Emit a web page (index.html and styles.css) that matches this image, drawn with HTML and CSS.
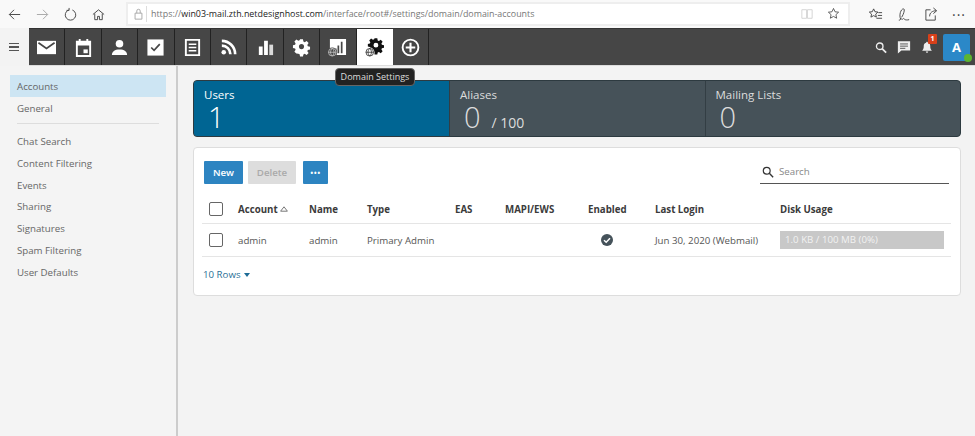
FILE: index.html
```html
<!DOCTYPE html>
<html lang="en">
<head>
<meta charset="utf-8">
<title>Domain Settings</title>
<link rel="stylesheet" href="styles.css">
</head>
<body>
<header class="browser">
  <div class="browser-btns">
    <svg class="bi" viewBox="0 0 16 16"><path d="M14 8H2.500M7.500 3 2.500 8l5 5" class="ln"/></svg>
    <svg class="bi dim" viewBox="0 0 16 16"><path d="M2 8h11.500M8.500 3l5 5-5 5" class="ln"/></svg>
    <svg class="bi" viewBox="0 0 16 16"><path d="M6 3.200A5.600 5.600 0 1 0 10 3.200M6.500 1v2.600H3.800" class="ln"/></svg>
    <svg class="bi" viewBox="0 0 16 16"><path d="M2 8l6-5 6 5M4 7v6.500h3V10h2v3.500h3V7" class="ln"/></svg>
  </div>
  <div class="address">
    <svg class="lock" viewBox="0 0 12 14"><path d="M2 6h8v7H2zM4 6V3.500a2 2 0 0 1 4 0V6" class="ln"/></svg>
    <span class="url">https://<b>win03-mail.zth.netdesignhost.com</b>/interface/root#/settings/domain/domain-accounts</span>
    <svg class="book" viewBox="0 0 14 14"><path d="M1 2h5.500v10H1zM7.500 2H13v10H7.500z" class="ln"/></svg>
    <svg class="star" viewBox="0 0 16 16"><path d="M8 1.800l1.900 4.100 4.400.5-3.300 3 .9 4.400L8 11.600l-3.900 2.200.9-4.400-3.300-3 4.400-.5z" class="ln"/></svg>
  </div>
  <div class="browser-right">
    <svg class="bi" viewBox="0 0 16 16"><path d="M6 2l1.400 3 3.200.4-2.400 2.200.7 3.200L6 9.200l-2.900 1.600.7-3.200L1.400 5.400 4.600 5zM11 6h4M10.500 9H15M9 12h6" class="ln"/></svg>
    <svg class="bi" viewBox="0 0 16 16"><path d="M5 13C3 9 5 2 8 2c2 0 0 6-2 9M3 14h1c2-3 2 0 3-1s1-1 2 0 3 1 5 .5" class="ln"/></svg>
    <svg class="bi" viewBox="0 0 16 16"><path d="M7 3H2v11h10V9M6 10c0-4 3-6 7-6M10 1l3.500 3L10 7" class="ln"/></svg>
    <span class="more">···</span>
  </div>
</header>

<nav class="nav">
  <div class="hamb"><i></i><i></i><i></i></div>
  <a class="tab"><svg viewBox="0 0 20 20"><path d="M0 3h20v14H0z" fill="#fff"/><path d="M1.500 5l8.500 6 8.500-6" fill="none" stroke="#464646" stroke-width="1.800"/></svg></a>
  <a class="tab"><svg viewBox="0 0 20 20"><path fill="#fff" fill-rule="evenodd" d="M2 3h3V1h2v2h6V1h2v2h3v17H2zM4 8v10h12V8z"/><path fill="#fff" d="M10 12h4.500v4H10z"/></svg></a>
  <a class="tab"><svg viewBox="0 0 20 20"><circle cx="10" cy="6" r="4" fill="#fff"/><path d="M2 18c0-4 3-6 8-6s8 2 8 6z" fill="#fff"/></svg></a>
  <a class="tab"><svg viewBox="0 0 20 20"><path d="M1.500 1.500h17v17h-17z" fill="#fff"/><path d="M5.500 10l3 3 6-6.500" fill="none" stroke="#464646" stroke-width="1.800"/></svg></a>
  <a class="tab"><svg viewBox="0 0 20 20"><path d="M3 2h14v16H3z" fill="none" stroke="#fff" stroke-width="2"/><path d="M6 6.500h8M6 10h8M6 13.500h8" stroke="#fff" stroke-width="1.600"/></svg></a>
  <a class="tab"><svg viewBox="0 0 20 20"><circle cx="5" cy="15" r="2.400" fill="#fff"/><path d="M3 8a9 9 0 0 1 9 9M3 3a14 14 0 0 1 14 14" fill="none" stroke="#fff" stroke-width="2.800"/></svg></a>
  <a class="tab"><svg viewBox="0 0 20 20"><path fill="#fff" d="M3 9h4v9H3zM8.500 3h4v15h-4z"/><path fill="#fff" d="M14 7h4v11h-4z" opacity=".8"/></svg></a>
  <a class="tab"><svg viewBox="0 0 20 20"><path fill="#fff" fill-rule="evenodd" d="M8.300 1h3.400l.5 2.600 1.500.7 2.300-1.400 2.300 2.400-1.500 2.200.6 1.500 2.600.6v3.200l-2.600.6-.6 1.500 1.500 2.200-2.300 2.300-2.300-1.400-1.500.6-.5 2.400H8.300l-.5-2.500-1.500-.6L4 17.700l-2.300-2.300 1.400-2.200-.6-1.500L0 11.100V7.900l2.500-.5.600-1.500-1.400-2.300L4 1.200l2.300 1.500 1.500-.7zM10 6.500a3 3 0 1 0 0 6 3 3 0 0 0 0-6z" transform="translate(1 .5) scale(.9)"/></svg></a>
  <a class="tab"><svg viewBox="0 0 20 20"><path fill="#fff" d="M2 1h17v17H9v-7H2z"/><path fill="#464646" d="M10 8h1.800v8H10zM13.500 4h1.800v12h-1.800z"/><circle cx="4.500" cy="15" r="5" fill="#464646"/><g class="globe"><circle cx="4.500" cy="15" r="4"/><path d="M.5 15h8M4.500 11c-2.400 2.400-2.400 5.600 0 8 2.400-2.400 2.400-5.600 0-8"/></g></svg></a>
  <a class="tab active"><svg viewBox="0 0 20 20"><path fill="#111" fill-rule="evenodd" d="M8.300 1h3.400l.5 2.600 1.500.7 2.300-1.400 2.300 2.400-1.500 2.200.6 1.500 2.600.6v3.200l-2.600.6-.6 1.500 1.500 2.200-2.300 2.300-2.300-1.400-1.500.6-.5 2.400H8.300l-.5-2.500-1.500-.6L4 17.700l-2.300-2.300 1.400-2.200-.6-1.500L0 11.100V7.900l2.500-.5.600-1.500-1.400-2.300L4 1.200l2.300 1.500 1.500-.7zM10 6.500a3 3 0 1 0 0 6 3 3 0 0 0 0-6z" transform="translate(3 -.5) scale(.85)"/><circle cx="5" cy="15" r="5" fill="#fff"/><g class="globe dark"><circle cx="5" cy="15" r="4"/><path d="M1 15h8M5 11c-2.400 2.400-2.400 5.600 0 8 2.400-2.400 2.400-5.600 0-8"/></g></svg></a>
  <a class="tab"><svg viewBox="0 0 20 20"><circle cx="10" cy="10" r="8.300" fill="none" stroke="#fff" stroke-width="2"/><path d="M10 5v10M5 10h10" stroke="#fff" stroke-width="2.200"/></svg></a>
  <div class="nav-right">
    <svg class="ni" viewBox="0 0 14 14"><circle cx="5.500" cy="5.500" r="3.800" fill="none" stroke="#eee" stroke-width="1.600"/><path d="M8.500 8.500l4.500 4.500" stroke="#eee" stroke-width="2"/></svg>
    <svg class="ni chat" viewBox="0 0 16 16"><path fill="#eee" d="M1 1.500h14V12H5l-4 3.500z"/><path d="M3.500 4.500h9M3.500 7h9M3.500 9.500h6" stroke="#464646"/></svg>
    <span class="bell">
      <svg class="ni" viewBox="0 0 14 16"><path fill="#eee" d="M7 1a1 1 0 0 1 1 1.200c2.400.6 3 2.400 3 4.300 0 2.500.6 4 2 5.500H1c1.400-1.500 2-3 2-5.500 0-1.900.6-3.700 3-4.300A1 1 0 0 1 7 1zM5.500 13h3a1.500 1.500 0 0 1-3 0z"/></svg>
      <em class="badge">1</em>
    </span>
    <span class="avatar">A<i class="online"></i></span>
  </div>
</nav>
<div class="tooltip">Domain Settings</div>

<div class="page">
  <aside class="side">
    <ul class="menu">
      <li class="sel">Accounts</li>
      <li>General</li>
    </ul>
    <hr class="rule">
    <ul class="menu">
      <li>Chat Search</li>
      <li>Content Filtering</li>
      <li>Events</li>
      <li>Sharing</li>
      <li>Signatures</li>
      <li>Spam Filtering</li>
      <li>User Defaults</li>
    </ul>
  </aside>
  <main class="main">
    <section class="stats">
      <div class="stat on"><span class="lbl">Users</span><span class="num">1</span></div>
      <div class="stat"><span class="lbl">Aliases</span><span class="num">0<small>/ 100</small></span></div>
      <div class="stat"><span class="lbl">Mailing Lists</span><span class="num">0</span></div>
    </section>
    <section class="card">
      <div class="tools">
        <button class="btn pri">New</button>
        <button class="btn off">Delete</button>
        <button class="btn pri dots">•••</button>
        <label class="search">
          <svg viewBox="0 0 14 14"><circle cx="5.500" cy="5.500" r="4" fill="none" stroke="#333" stroke-width="1.400"/><path d="M8.500 8.500L13 13" stroke="#333" stroke-width="1.600"/></svg>
          <span>Search</span>
        </label>
      </div>
      <div class="row head">
        <span class="c0"><i class="cb"></i></span>
        <span class="c1">Account <svg class="sort" viewBox="0 0 8 6"><path d="M4 .8L7.400 5.200H.6z" fill="none" stroke="#777"/></svg></span>
        <span class="c2">Name</span>
        <span class="c3">Type</span>
        <span class="c4">EAS</span>
        <span class="c5">MAPI/EWS</span>
        <span class="c6">Enabled</span>
        <span class="c7">Last Login</span>
        <span class="c8">Disk Usage</span>
      </div>
      <div class="row body-row">
        <span class="c0"><i class="cb"></i></span>
        <span class="c1">admin</span>
        <span class="c2">admin</span>
        <span class="c3">Primary Admin</span>
        <span class="c4"></span>
        <span class="c5"></span>
        <span class="c6 en"><svg viewBox="0 0 12 12"><circle cx="6" cy="6" r="6" fill="#45525a"/><path d="M3 6.200l2.200 2.100L9 4.200" fill="none" stroke="#fff" stroke-width="1.500"/></svg></span>
        <span class="c7">Jun 30, 2020 (Webmail)</span>
        <span class="c8"><span class="disk">1.0 KB / 100 MB (0%)</span></span>
      </div>
      <div class="rows">10 Rows <i class="caret"></i></div>
    </section>
  </main>
</div>
</body>
</html>
```
FILE: styles.css
```css
* { box-sizing: border-box; }
html, body { margin: 0; height: 100%; overflow: hidden; }
body { font-family: "Open Sans", sans-serif; font-size: 9.700px; color: #555; background: #f3f3f3; display: flex; flex-direction: column; position: relative; }
svg { display: block; }
.ln { fill: none; stroke: #444; stroke-width: 1; }

.browser { height: 28px; flex: none; display: flex; align-items: center; background: #f9f9f9; }
.browser-btns { display: flex; gap: 13px; padding-left: 7px; width: 126px; flex: none; }
.bi { width: 15px; height: 15px; flex: none; }
.dim { opacity: .45; }
.address { width: 724px; height: 24px; margin-top: -1px; flex: none; background: #fff; border: 2px solid #eee; display: flex; align-items: center; padding: 0 8px 0 5px; }
.lock { width: 11px; height: 12px; opacity: .5; flex: none; }
.url { margin-left: 2px; padding-left: 4px; border-left: 1px solid #ddd; font-size: 8.900px; color: #777; flex: 1; white-space: nowrap; line-height: 16px; }
.url b { font-weight: 400; color: #222; }
.book { width: 12px; height: 12px; opacity: .25; margin-right: 14px; flex: none; }
.star { width: 13px; height: 13px; flex: none; }
.browser-right { display: flex; gap: 13px; align-items: center; padding-left: 18px; }
.more { font-size: 14px; color: #444; line-height: 15px; letter-spacing: 1px; }

.nav { height: 38px; flex: none; display: flex; background: #464646; border-top: 1px solid #333; border-bottom: 1px solid #ddd; }
.hamb { width: 29px; flex: none; background: #f3f3f3; margin: -1px 0; display: flex; flex-direction: column; justify-content: center; gap: 2px; padding-left: 9px; }
.hamb i { display: block; width: 10px; height: 1.500px; background: #555; }
.tab { width: 36.400px; flex: none; display: flex; align-items: center; justify-content: center; border-right: 1px solid #222; }
.tab svg { width: 19px; height: 19px; }
.tab.active { background: #fff; border-right-color: #fff; }
.globe { fill: none; stroke: #ddd; stroke-width: .7; }
.globe.dark { stroke: #222; stroke-width: .8; }
.nav-right { margin-left: auto; display: flex; align-items: center; gap: 10px; padding-right: 5px; }
.ni { width: 12px; height: 13px; }
.chat { width: 14px; height: 14px; }
.bell { position: relative; }
.badge { position: absolute; right: -4px; top: -7px; width: 9px; height: 10px; background: #d8401a; color: #fff; font: 700 7px/10px "Open Sans", sans-serif; text-align: center; border-radius: 1px; }
.avatar { position: relative; width: 27px; height: 27px; background: #2b88c8; color: #fff; font-size: 13px; font-weight: 700; display: flex; align-items: center; justify-content: center; border-radius: 2px; }
.online { position: absolute; right: -2px; bottom: -1px; width: 8px; height: 8px; border-radius: 50%; background: #5cb531; }

.tooltip { position: absolute; left: 335px; top: 68px; height: 18px; width: 80px; background: #222; color: #ddd; border: 1px solid #666; border-radius: 4px; font-size: 9px; line-height: 16px; text-align: center; white-space: nowrap; z-index: 2; }

.page { flex: 1; display: flex; min-height: 0; }
.side { width: 178px; flex: none; border-right: 2px solid #ccc; padding: 9px 10px 0; background: #f4f4f4; }
.menu { list-style: none; margin: 0; padding: 0; }
.menu li { height: 21.900px; line-height: 23px; padding-left: 7px; color: #666; }
.menu li.sel { background: #cde5f3; }
.rule { border: 0; height: 1px; background: #ddd; margin: 4px 7px 6px; }

.main { flex: 1; padding: 14px 14px 0 15px; min-width: 0; }
.stats { height: 57px; display: flex; border: 1px solid #2d3a40; border-radius: 4px; overflow: hidden; background: #465259; }
.stat { flex: 1; padding: 6px 10px 0; color: #ddd; border-left: 1px solid #333e44; display: flex; flex-direction: column; }
.stat.on { background: #006593; color: #fff; border-left: 0; flex: 0 0 255px; }
.lbl { font-size: 11.500px; line-height: 15px; }
.num { font-size: 29px; line-height: 30px; padding-left: 4px; font-weight: 300; }
.num small { font-size: 14px; font-weight: 400; margin-left: 11px; }

.card { margin-top: 10px; height: 149px; background: #fff; border: 1px solid #ddd; border-radius: 4px; padding: 12px 9px 0 8px; }
.tools { display: flex; align-items: center; padding: 0 2px; height: 24px; }
.btn { height: 23px; border: 0; border-radius: 1px; font: 600 9.700px "Open Sans", sans-serif; padding: 0; }
.pri { background: #2d84c1; color: #fff; width: 39px; }
.off { background: #ddd; color: #aaa; width: 48px; margin-left: 5px; }
.dots { width: 25px; margin-left: 7px; font-size: 8px; letter-spacing: .5px; }
.search { margin-left: auto; width: 189px; height: 24px; border-bottom: 1px solid #555; display: flex; align-items: center; gap: 5px; padding: 1px 0 1px 2px; color: #888; }
.search svg { width: 12px; height: 12px; }

.row { display: grid; grid-template-columns: 36px 71px 58px 88px 50px 83px 67px 125px 1fr; align-items: center; }
.head { margin-top: 10px; height: 30px; padding-top: 1px; border-bottom: 1px solid #e5e5e5; font-weight: 700; color: #3b3b3b; }
.body-row { height: 33px; border-bottom: 1px solid #e5e5e5; color: #555; }
.row span { white-space: nowrap; }
.c0 { padding-left: 7px; }
.c1 { display: flex; align-items: center; gap: 2px; }
.cb { display: block; width: 14px; height: 14px; border: 1.500px solid #666; border-radius: 2px; background: #fff; }
.sort { width: 8px; height: 6px; }
.en svg { width: 12px; height: 12px; margin-left: 13px; }
.disk { display: block; background: #c8c8c8; color: #f2f2f2; height: 18px; line-height: 18px; padding-left: 5px; width: 164px; }
.rows { margin-top: 11px; color: #2a6f96; padding-left: 1px; display: flex; align-items: center; gap: 3px; }
.caret { width: 0; height: 0; border: 3px solid transparent; border-top: 4px solid #1e6c96; border-bottom: 0; }
```
